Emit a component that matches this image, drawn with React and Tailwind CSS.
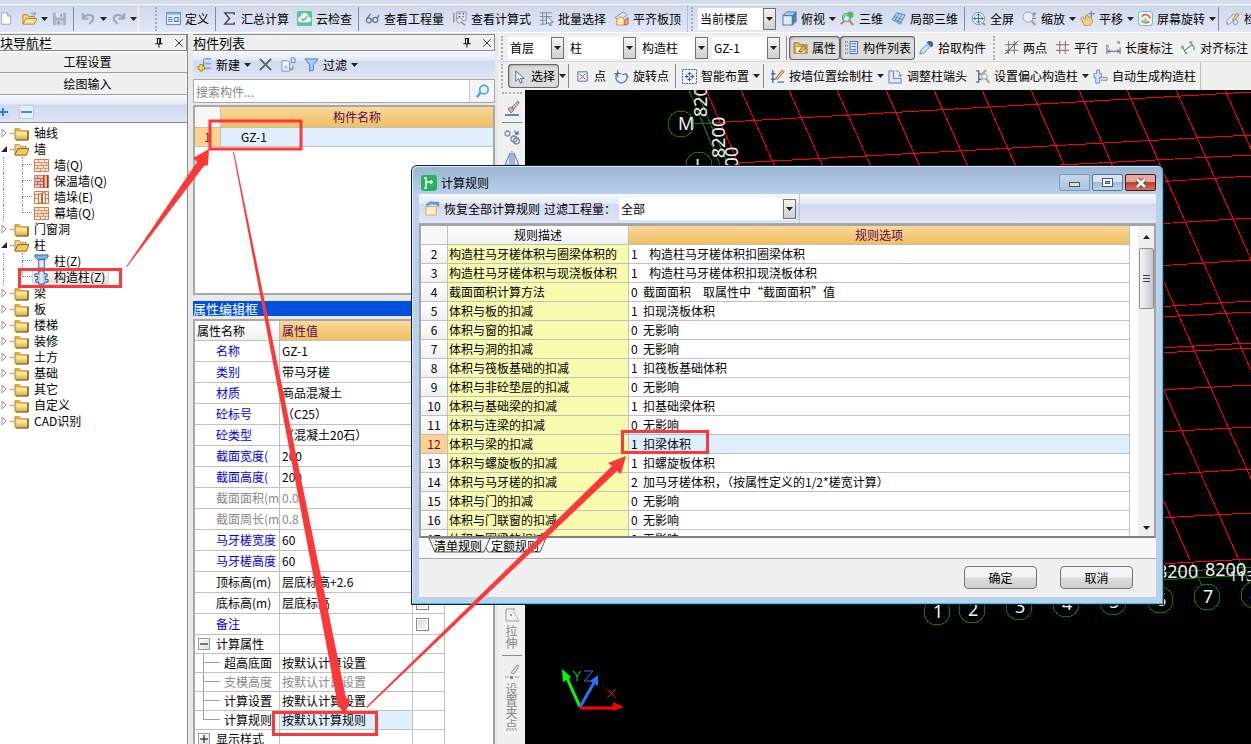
import { useState } from 'react'

const bar = 'bg-[linear-gradient(#f6f9ff_0%,#e3e9f5_34%,#d1d9ed_36%,#dfe5f6_100%)]'
const gold = 'bg-[linear-gradient(#f9d99c,#f0bf60)]'

const glyphs = {
  file: <path d="M2 1h7l4 4v10H2z M9 1v4h4" fill="#fff" stroke="#8a9bb5" />,
  open: (
    <>
      <path d="M1 14V4h5l1 2h6v3" fill="#f5d583" stroke="#a8823a" />
      <path d="M1 14l3-6h12l-3 6z" fill="#fbe29a" stroke="#a8823a" />
      <path d="M9 3c2-2 4-1 5 1m0-3v3h-3" fill="none" stroke="#7f9bb0" />
    </>
  ),
  save: (
    <>
      <path d="M1 2h14v13H1z" fill="#a9b0c2" />
      <path d="M4 2h8v5H4z" fill="#dfe3ee" />
      <path d="M4 10h8v5H4z" fill="#c9cedd" />
      <path d="M9 3h2v3H9zM6 11h2v3H6z" fill="#8f97ac" />
    </>
  ),
  undo: <path d="M2 2v6h6M3 7c3-4 10-4 10 1 0 3-3 4-4 6" fill="none" stroke="#a4aabd" strokeWidth="2.4" />,
  redo: <path d="M14 2v6H8m5-1C10 3 3 3 3 8c0 3 3 4 4 6" fill="none" stroke="#a4aabd" strokeWidth="2.4" />,
  define: (
    <>
      <path d="M.5 1.5h15v13H.5z" fill="#e8f0fb" stroke="#5b7fc0" />
      <path d="M1 2h14v2H1z" fill="#8fb0e4" />
      <path d="M2 7h5M2 9h5M2 11h5M9 7h5M9 11h5" stroke="#5578b8" />
      <path d="M9 7h4v4H9z" fill="none" stroke="#5578b8" />
    </>
  ),
  sigma: <path d="M13 4V2H3l5 6-5 6h10v-2" fill="none" stroke="#3c4254" strokeWidth="1.5" />,
  cloud: (
    <>
      <rect width="16" height="16" rx="1" fill="#58c79a" />
      <path d="M4 12a3 3 0 0 1 0-6 4 4 0 0 1 8 0 3 3 0 0 1 0 6z" fill="#f2fbf6" />
      <path d="M5 8l2 2 4-4" fill="none" stroke="#3fae7e" strokeWidth="1.5" />
    </>
  ),
  glasses: (
    <g fill="none" stroke="#66748c" strokeWidth="1.3">
      <circle cx="4" cy="10" r="2.6" />
      <circle cx="11" cy="9.5" r="2.6" />
      <path d="M6.5 9.5h2M2 8l4-5M13 8l2-4" />
    </g>
  ),
  formula: (
    <>
      <path d="M5 1h10v9H5z" fill="#e9effa" stroke="#8593b5" />
      <path d="M7 3h2M11 3h2M7 6h2M11 6h2" stroke="#5b6f9f" strokeWidth="1.5" />
      <circle cx="8" cy="10" r="3" fill="#dceafa" stroke="#8794ab" />
      <path d="M2 2v10M10 12l4 3" stroke="#b28a4c" strokeWidth="1.5" />
    </>
  ),
  batch: (
    <>
      <path d="M1 2h13M1 6h13M1 10h8M1 14h6M4 1v14M8 1v10" stroke="#7f8ba8" />
      <path d="M8 5v9l2-2 2 4 1-1-1-3h3z" fill="#fff" stroke="#62708d" />
    </>
  ),
  level: (
    <>
      <path d="M1 7l9-6 4 3-8 6z" fill="#dce5f2" stroke="#8090ad" />
      <path d="M3 9l4-3 4 3v6H3z" fill="#fff2a8" stroke="#c89336" />
      <path d="M11 10l4-3v7l-4 1z" fill="#e9a07e" stroke="#b8684a" />
    </>
  ),
  cube: (
    <>
      <path d="M1 5l4-4h10l-4 4z" fill="#a9cdf0" stroke="#54708f" />
      <path d="M1 5h10v10H1z" fill="#dcebf9" stroke="#54708f" />
      <path d="M11 5l4-4v10l-4 4z" fill="#4d83bd" stroke="#54708f" />
    </>
  ),
  view3d: (
    <>
      <circle cx="7" cy="7" r="4.5" fill="#a4d9a0" stroke="#5b8f67" />
      <circle cx="11" cy="4" r="3.4" fill="#55b950" />
      <path d="M10 10l4 5M1 14l4-4" stroke="#b58248" strokeWidth="2" />
      <circle cx="7" cy="8" r="3" fill="#d9eefc" stroke="#7fa6bf" />
    </>
  ),
  part3d: (
    <>
      <path d="M1 9l5-7 9 2-5 10z" fill="#b9d8f4" stroke="#4e84b9" />
      <path d="M4 10l5-8M7 12l5-9M3 6l9 3M4 9l7 3" stroke="#4e84b9" />
    </>
  ),
  full: (
    <>
      <circle cx="8" cy="8" r="6.5" fill="#eaf2fd" stroke="#6f8bb8" />
      <path d="M8 3v10M3 8h10M6 5l2-2 2 2M6 11l2 2 2-2M5 6L3 8l2 2M11 6l2 2-2 2" fill="none" stroke="#3f6097" />
      <path d="M13 13l2 2" stroke="#b58248" strokeWidth="2" />
    </>
  ),
  zoomer: (
    <>
      <circle cx="6.5" cy="6.5" r="5.5" fill="#e4effb" stroke="#93a3bd" />
      <path d="M10 10l4 5" stroke="#c79a55" strokeWidth="2.4" />
      <path d="M13 1v5M11 3h4M11 8h4" stroke="#6e7f9f" />
    </>
  ),
  pan: (
    <>
      <path d="M1 8l2-2 3 3V5l2-1 1 3 2-1 2 3v3l-3 4H5z" fill="#f1cf8c" stroke="#b68d48" />
      <path d="M12 0v7M9 3h7" stroke="#5e6f8e" />
    </>
  ),
  spin: (
    <>
      <rect x=".5" y=".5" width="15" height="15" rx="3" fill="#e6f5f6" stroke="#64bac4" />
      <path d="M4 6a5 5 0 0 1 9 2M12 11a5 5 0 0 1-8-1" fill="none" stroke="#e2694a" strokeWidth="1.8" />
      <path d="M5 12l3-5 3 5z" fill="#9fd487" />
    </>
  ),
  check: (
    <>
      <path d="M2 10l7-7 3 3-7 8H2z" fill="#e1eaf7" stroke="#7d8fae" />
      <path d="M8 9l5-7 2 2-5 7z" fill="#f0c987" stroke="#b58248" />
      <circle cx="11" cy="12" r="2.5" fill="#d8e8fa" stroke="#7d8fae" />
    </>
  ),
  attr: (
    <>
      <path d="M1 3h5l1 2h8v9H1z" fill="#f3b550" stroke="#a66f22" />
      <path d="M3 7h10v7H3z" fill="#fff" stroke="#c79242" />
      <path d="M6 12l5-6 3 2-5 5z" fill="#d7c33c" stroke="#77661e" />
    </>
  ),
  list: (
    <>
      <path d="M1 2h3M1 6h3M1 10h3M1 14h3" stroke="#5f7bb4" strokeDasharray="1 1" strokeWidth="2" />
      <path d="M6.5 1.5h8v13h-8z" fill="#dfe9fa" stroke="#4767a8" />
      <path d="M8 4h5M8 7h5M8 10h5M8 12h5" stroke="#4767a8" />
    </>
  ),
  dropper: (
    <>
      <path d="M1 15l1-4 6-6 3 3-6 6z" fill="#cfe4f8" stroke="#6f88a8" />
      <path d="M8 3l2-2h3l2 2v3l-2 2z" fill="#3f6aa6" />
    </>
  ),
  two: (
    <>
      <path d="M5 1v14M11 1v14M1 5h14M1 11h14" stroke="#6a7488" />
      <path d="M1 15L15 1" stroke="#a33b3b" />
      <path d="M3 12h2v2H3zM11 3h2v2h-2z" fill="#3a9a4a" />
    </>
  ),
  parallel: (
    <>
      <path d="M5 1v14M11 1v14" stroke="#6a7488" />
      <path d="M1 5h14M1 11h14" stroke="#99556a" />
    </>
  ),
  length: (
    <>
      <path d="M1 8v7M15 8v7M2 12h12M4 10l-2 2 2 2M12 10l2 2-2 2" fill="none" stroke="#4c5468" />
      <path d="M0 5h3v3H0zM12 1h3v3h-3z" fill="#6ec472" />
    </>
  ),
  align: (
    <>
      <path d="M2 8l3 6M10 2l4 6M4 11l8-6" stroke="#4c5468" />
      <path d="M0 6h3v3H0zM9 1h3v3H9zM13 8h2v3h-2zM4 13h3v2H4z" fill="#6ec472" />
    </>
  ),
  cursor: <path d="M4 2v11l3-3 2 5 2-1-2-4h4z" fill="#fff" stroke="#4b6392" />,
  point: (
    <>
      <path d="M3 3h10v10H3z" fill="#e9effb" stroke="#566fa8" />
      <path d="M5 5l6 6M11 5l-6 6" stroke="#c34b62" />
    </>
  ),
  rotate: (
    <>
      <path d="M5 3.500a6 6 0 1 0 8 2M13 5l-4 1M13 5l2 4" fill="none" stroke="#6781b5" strokeWidth="1.5" />
      <path d="M4 1v8M0 5h8" stroke="#4c5f88" />
    </>
  ),
  smart: (
    <>
      <path d="M.5.5h15v15H.5z" fill="#eef2fa" stroke="#44506c" strokeDasharray="2 1" />
      <path d="M8 3v4M8 9v4M3 8h4M9 8h4M6 5h4M6 11h4M5 6v4M11 6v4" stroke="#34466e" />
    </>
  ),
  wall: (
    <>
      <path d="M3 1v14M1 5h5M1 11h5M8 14h7" stroke="#4f6ba8" strokeWidth="1.5" />
      <path d="M6 10l7-9 2 2-7 8z" fill="#e8bf7b" stroke="#97713a" />
    </>
  ),
  end: (
    <>
      <path d="M1 2h5v8h8v5H1z" fill="#dce6f8" stroke="#6279b0" />
      <path d="M8 2c4 0 5 2 5 6M11 6l2 2 2-2" fill="none" stroke="#6279b0" />
    </>
  ),
  offset: (
    <>
      <path d="M1 2h3v3h3M1 14h3v-3h3M4 5v6" fill="none" stroke="#4f6ba8" strokeWidth="1.5" />
      <circle cx="10" cy="8" r="3" fill="#e4effb" stroke="#8593ab" />
      <path d="M12 10l3 5M8 5l4-4" stroke="#c79a55" strokeWidth="2" />
    </>
  ),
  autogen: (
    <>
      <path d="M4 1h3v4h2v4H7v6H3V9H1V5h3z" fill="#dbe8fb" stroke="#5e7ec0" />
      <path d="M9 9h6v3H8" fill="#e8e8ec" stroke="#85878f" />
    </>
  ),
  add: (
    <>
      <path d="M8 2h7M8 7h7M8 12h7" stroke="#8ca5cf" strokeWidth="2" />
      <path d="M7 2v11" stroke="#6c83b0" />
      <path d="M3 8h3v2h2v3H6v2H3v-2H1v-3h2z" fill="#f6e04c" stroke="#a48b1c" />
    </>
  ),
  cross: <path d="M2 2l12 12M14 2L2 14" stroke="#5d6168" strokeWidth="2" />,
  copy: (
    <>
      <path d="M1 4h6l2 2v9H1z" fill="#f5f7fc" stroke="#8390aa" />
      <path d="M11 1h4v5h-4zM13 9v4h-3m1-1.5L10 13l1.500 1.500" fill="none" stroke="#6f86bd" />
      <path d="M3 9h4v4H3z" fill="#c7cfdf" />
    </>
  ),
  funnel: <path d="M1 2h14L10 8v6l-4 1V8z" fill="#a9cdf5" stroke="#4b78bb" />,
  brush: (
    <>
      <path d="M8 7l6-6 1 2-5 6z" fill="#f0cb66" stroke="#7d7a8a" />
      <path d="M4 9l3-2 3 3-3 3z" fill="#e6a3c2" stroke="#8a6e96" />
      <path d="M1 15h14" stroke="#5d82bd" strokeWidth="2" />
    </>
  ),
  circles: (
    <g fill="none" stroke="#7d89a4" strokeWidth="1.3">
      <circle cx="3.5" cy="4.5" r="2.5" />
      <circle cx="10" cy="10" r="3" />
      <circle cx="12.5" cy="12" r="3" />
      <path d="M10 2l4 3m0-3v3h-3" stroke="#4f78bf" />
    </g>
  ),
  mirror: <path d="M6 2v12H1zM10 2v12h5zM8 0v16" fill="#dfe9fa" stroke="#5e79b3" />,
  stretch: (
    <>
      <path d="M2 2h9M2 2v12h13" fill="none" stroke="#9a9a9a" />
      <path d="M10 2v3l5 9" fill="none" stroke="#9a9a9a" strokeDasharray="2 1" />
      <path d="M6 7h2v2H6z" fill="#9a9a9a" />
    </>
  ),
  grip: (
    <>
      <path d="M7 9l6-8 2 1-5 8z" fill="#ddd" stroke="#999" />
      <path d="M1 13h4M11 13h4" stroke="#999" />
      <path d="M6 12h3v3H6z" fill="#888" />
    </>
  ),
  restore: (
    <>
      <path d="M1 6h11v9H1z" fill="#fbf0bd" stroke="#c4b074" />
      <path d="M2 5c2-3 5-4 9-2" fill="none" stroke="#6b9be0" strokeWidth="3" />
      <path d="M9 1h6v6z" fill="#5a8bd6" />
    </>
  ),
  search: (
    <>
      <circle cx="9.5" cy="6" r="4.5" fill="#eef8ff" stroke="#4aa3dd" strokeWidth="1.8" />
      <path d="M6 9l-4 5" stroke="#4aa3dd" strokeWidth="2.6" />
    </>
  ),
  pin: <path d="M5 2h6M6 2v7M10 2v7M9 2v7M3 9h10M8 9v5" stroke="#111" strokeWidth="1.4" fill="none" />,
  close: <path d="M3 3l10 10M13 3L3 13" stroke="#333" strokeWidth="1.3" />,
  folder: (
    <>
      <path d="M1 3h5l1 2h8v9H1z" fill="#e9b93f" stroke="#b08a2b" />
      <path d="M2 6h12v7H2z" fill="#fbe39a" />
      <path d="M2 10h12v3H2z" fill="#efc65c" />
      <path d="M15 5v10H2" fill="none" stroke="#4c3c12" />
    </>
  ),
  folderOpen: (
    <>
      <path d="M1 13V3h5l1 2h6v3" fill="#f7dc8c" stroke="#b08a2b" />
      <path d="M1 14l3-7h12l-3 7z" fill="#f4cd5d" stroke="#7b5f1c" />
    </>
  ),
  brick: (
    <>
      <path d="M.5 1.5h15v13H.5z" fill="#fdeadb" stroke="#c2703c" />
      <path d="M1 5h14M1 8h14M1 11h14M5 2v3M11 2v3M8 5v3M13 5v3M4 8v3M10 8v3M7 11v3M12 11v3" stroke="#d58a58" />
    </>
  ),
  brickDark: (
    <>
      <path d="M.5 1.5h15v13H.5z" fill="#f3c3b4" stroke="#c07a70" />
      <path d="M1 5h9M1 8h9M1 11h9M4 2v3M7 5v3M4 8v3M7 11v3" stroke="#b0605a" />
      <path d="M10.5 1v14M14.5 1v14" stroke="#8f3b22" strokeWidth="1.5" />
      <path d="M12.5 2v12" stroke="#f0b78a" strokeWidth="2" />
    </>
  ),
  brickStep: (
    <>
      <path d="M.5 1.5h15v13H.5z" fill="#fdeadb" stroke="#c2703c" />
      <path d="M1 5h4M1 9h4M12 5h3M12 9h3" stroke="#c2703c" />
      <path d="M5 4h3v10H5zM9 3h3v11H9z" fill="#fff" stroke="#b25a28" />
    </>
  ),
  column: (
    <>
      <path d="M1 1h14v2l-3 3H4L1 3z" fill="#7faeea" stroke="#2c5aa8" />
      <path d="M5 6h6v9H5z" fill="#dfeeff" stroke="#2c5aa8" />
    </>
  ),
  structural: (
    <>
      <path d="M5 1h6v3h3v3h-2v3h3v3h-4v2H5v-2H2v-3h2V7H1V4h4z" fill="#b9d3f8" stroke="#274f9c" />
      <path d="M7 2h2v12H7z" fill="#f2f7ff" />
    </>
  ),
}

function Icon({ name, className = 'w-[15px] h-[15px]' }) {
  return (
    <svg viewBox="0 0 16 16" className={`shrink-0 ${className}`} aria-hidden="true">
      {glyphs[name]}
    </svg>
  )
}

function Caret({ className = '' }) {
  return (
    <svg viewBox="0 0 7 4" className={`w-[7px] h-1 shrink-0 ${className}`} aria-hidden="true">
      <path d="M0 0h7L3.500 4z" fill="#222" />
    </svg>
  )
}

function ToolButton({ icon, label, menu, pressed }) {
  return (
    <button
      className={`flex items-center gap-1 h-6 shrink-0 whitespace-nowrap pl-1 ${menu ? 'pr-0' : 'pr-1'} ${
        pressed ? 'rounded-sm bg-[#dcdcdc] shadow-[inset_0_0_0_1px_#666,inset_1px_1px_3px_#888]' : ''
      }`}
    >
      <Icon name={icon} />
      {label && <span>{label}</span>}
      {menu && <Caret />}
    </button>
  )
}

function Sep() {
  return <span className="w-px h-6 mx-[2px] bg-[#888c96] shrink-0" />
}

function Grip() {
  return <span className="w-[3px] h-6 mr-1 ml-[3px] border-l-2 border-dotted border-[#a9adb8] shrink-0" />
}

function Combo({ label, value, className }) {
  return (
    <div className={`relative shrink-0 ${className}`}>
      <select aria-label={label} className="appearance-none w-full h-[22px] bg-white pl-[2px] pr-4 text-[12px] outline-none">
        <option>{value}</option>
      </select>
      <span className="absolute right-0 top-0 w-[13px] h-[22px] border border-[#707070] bg-[linear-gradient(#f4f4f4,#cfcfcf)] flex items-center justify-center pointer-events-none">
        <Caret />
      </span>
    </div>
  )
}

function MainToolbar() {
  return (
    <div className="flex items-center h-[29px] shrink-0 overflow-hidden border-y border-y-white bg-[linear-gradient(#cfd8ec,#e1e7f6)]">
      <div className="flex items-center h-full w-[139px] shrink-0 border-r border-white">
        <Icon name="file" className="w-[13px] h-[15px]" />
        <span className="w-[5px]" />
        <ToolButton icon="open" menu />
        <ToolButton icon="save" />
        <Sep />
        <span className="w-px" />
        <ToolButton icon="undo" menu />
        <ToolButton icon="redo" menu />
      </div>
      <div className="flex items-center h-full ml-[13px] w-[536px] shrink-0 border-r border-r-[#b8bfd0]">
        <Grip />
        <ToolButton icon="define" label="定义" />
        <Sep />
        <ToolButton icon="sigma" label="汇总计算" />
        <ToolButton icon="cloud" label="云检查" />
        <Sep />
        <ToolButton icon="glasses" label="查看工程量" />
        <ToolButton icon="formula" label="查看计算式" />
        <ToolButton icon="batch" label="批量选择" />
        <ToolButton icon="level" label="平齐板顶" />
      </div>
      <Grip />
      <Combo label="楼层范围" value="当前楼层" className="w-[78px] mr-[2px]" />
      <ToolButton icon="cube" label="俯视" menu />
      <ToolButton icon="view3d" label="三维" />
      <ToolButton icon="part3d" label="局部三维" />
      <Sep />
      <ToolButton icon="full" label="全屏" />
      <ToolButton icon="zoomer" label="缩放" menu />
      <ToolButton icon="pan" label="平移" menu />
      <ToolButton icon="spin" label="屏幕旋转" menu />
      <Sep />
      <ToolButton icon="check" label="检" />
    </div>
  )
}

function PanelTitle({ children }) {
  return (
    <div className="flex items-center h-[17px] shrink-0 border border-l-0 border-[#8c8c8c] bg-[#f0f0f0] text-[13px] leading-[15px]">
      <h2 className="flex-1">{children}</h2>
      <button aria-label="固定"><Icon name="pin" className="w-3 h-3" /></button>
      <button aria-label="关闭" className="ml-2 mr-px"><Icon name="close" className="w-3 h-3" /></button>
    </div>
  )
}

const tree = [
  { label: '轴线' },
  {
    label: '墙',
    children: [
      { label: '墙(Q)', icon: 'brick' },
      { label: '保温墙(Q)', icon: 'brickDark' },
      { label: '墙垛(E)', icon: 'brickStep' },
      { label: '幕墙(Q)', icon: 'brick' },
    ],
  },
  { label: '门窗洞' },
  {
    label: '柱',
    children: [
      { label: '柱(Z)', icon: 'column' },
      { label: '构造柱(Z)', icon: 'structural', active: true },
    ],
  },
  { label: '梁' },
  { label: '板' },
  { label: '楼梯' },
  { label: '装修' },
  { label: '土方' },
  { label: '基础' },
  { label: '其它' },
  { label: '自定义' },
  { label: 'CAD识别' },
]

function TreeLeaf({ node, last }) {
  return (
    <li className="flex items-center h-4">
      <span className="ml-[3px] w-[19px] h-full border-l border-dotted border-[#888]" />
      <span className="w-[10px] h-full flex flex-col">
        <span className="h-2 border-l border-b border-dotted border-[#888]" />
        {!last && <span className="h-2 border-l border-dotted border-[#888]" />}
      </span>
      <button
        className={`flex items-center h-4 gap-[5px] pl-[2px] pr-1 leading-4 ${
          node.active ? 'rounded-sm bg-[linear-gradient(#fafafa,#e0e0e0)] shadow-[inset_0_0_0_1px_#d4d4d4]' : ''
        }`}
      >
        <Icon name={node.icon} />
        {node.label}
      </button>
    </li>
  )
}

function TreeNode({ node }) {
  const [open, setOpen] = useState(Boolean(node.children))

  return (
    <li>
      <button className="flex items-center h-4 leading-4" onClick={() => setOpen(v => !v)}>
        <svg viewBox="0 0 8 8" className="w-2 h-2 mr-[2px]" aria-hidden="true">
          {open ? <path d="M7 1v6H1z" fill="#222" /> : <path d="M2 0l4 4-4 4z" fill="#fff" stroke="#999" />}
        </svg>
        <span className="w-1 border-b border-dotted border-[#888]" />
        <Icon name={open ? 'folderOpen' : 'folder'} />
        <span className="ml-[5px]">{node.label}</span>
      </button>
      {open && node.children && (
        <ul>
          {node.children.map((c, i) => (
            <TreeLeaf key={c.label} node={c} last={i === node.children.length - 1} />
          ))}
        </ul>
      )}
    </li>
  )
}

function NavPanel() {
  return (
    <aside className="w-[188px] shrink-0 flex flex-col border-r border-r-[#8c8c8c]">
      <PanelTitle>块导航栏</PanelTitle>
      <button className="h-[22px] pr-3 shrink-0 border-b border-t border-b-[#a0a0a0] border-t-white bg-[#f0f0f0]">工程设置</button>
      <button className="h-[22px] pr-3 shrink-0 border-b border-b-[#a0a0a0] bg-[#f0f0f0]">绘图输入</button>
      <div className={`h-[27px] pt-[6px] flex items-center gap-2 shrink-0 ${bar}`}>
        <button aria-label="全部展开" className="w-[11px] h-[14px] bg-[#cfdcf8] flex items-center">
          <svg viewBox="0 0 8 8" className="w-2 h-2" aria-hidden="true">
            <path d="M0 4h8M3 0v8" stroke="#2f86c8" strokeWidth="2" />
          </svg>
        </button>
        <button aria-label="全部折叠" className="w-[15px] h-[14px] bg-[#e6eefc] border border-[#b9cbf0] flex items-center justify-center">
          <span className="w-[11px] h-[2px] bg-[#3d93cf]" />
        </button>
      </div>
      <ul className="flex-1 pt-[2px] border-t border-t-[#8c8c8c] bg-white overflow-hidden">
        {tree.map(n => <TreeNode key={n.label} node={n} />)}
      </ul>
    </aside>
  )
}

const props = [
  { name: '名称', value: 'GZ-1', color: 'text-[#0000f0]' },
  { name: '类别', value: '带马牙槎', color: 'text-[#0000f0]' },
  { name: '材质', value: '商品混凝土', color: 'text-[#0000f0]' },
  { name: '砼标号', value: '（C25）', color: 'text-[#0000f0]' },
  { name: '砼类型', value: '（混凝土20石）', color: 'text-[#0000f0]' },
  { name: '截面宽度(', value: '200', color: 'text-[#0000f0]' },
  { name: '截面高度(', value: '200', color: 'text-[#0000f0]' },
  { name: '截面面积(m', value: '0.04', color: 'text-[#888]', muted: true },
  { name: '截面周长(m', value: '0.8', color: 'text-[#888]', muted: true },
  { name: '马牙槎宽度', value: '60', color: 'text-[#0000f0]' },
  { name: '马牙槎高度', value: '60', color: 'text-[#0000f0]' },
  { name: '顶标高(m)', value: '层底标高+2.6' },
  { name: '底标高(m)', value: '层底标高' },
  { name: '备注', value: '', color: 'text-[#0000f0]' },
]

const calcProps = [
  { name: '超高底面', value: '按默认计算设置' },
  { name: '支模高度', value: '按默认计算设置', muted: true },
  { name: '计算设置', value: '按默认计算设置' },
  { name: '计算规则', value: '按默认计算规则', active: true },
]

function Toggle({ open }) {
  return (
    <button
      aria-label={open ? '折叠' : '展开'}
      className="w-3 h-3 mr-[6px] shrink-0 border border-[#9a9a9a] bg-[linear-gradient(135deg,#fff,#ddd)]"
    >
      <svg viewBox="0 0 10 10" className="w-[10px] h-[10px]" aria-hidden="true">
        <path d={open ? 'M1 5h8' : 'M1 5h8M5 1v8'} stroke="#000" />
      </svg>
    </button>
  )
}

function PropertyTable() {
  const cell = 'border-r border-b border-[#c0c0c0] p-0 overflow-hidden whitespace-nowrap'

  return (
    <div className="flex-1 border-2 border-b-0 border-[#a8a8a8] border-r-[#a0a0a0] bg-white overflow-hidden">
      <table className="w-[250px] table-fixed border-separate border-spacing-0">
        <colgroup>
          <col className="w-[85px]" />
          <col className="w-[133px]" />
          <col className="w-[32px]" />
        </colgroup>
        <thead>
          <tr className="h-5 text-left">
            <th className={`${cell} pl-[2px] font-normal bg-[linear-gradient(#fff,#f0f0f0)]`}>属性名称</th>
            <th className={`${cell} pl-[2px] font-normal text-[#5a0a50] ${gold}`}>属性值</th>
            <th className={cell} />
          </tr>
        </thead>
        <tbody>
          {props.map(p => (
            <tr key={p.name} className="h-[21px]">
              <td className={`${cell} pl-[21px] ${p.color ?? ''}`}>{p.name}</td>
              <td className={`${cell} pl-[2px] ${p.muted ? 'text-[#888]' : ''}`}>{p.value}</td>
              <td className={cell}>
                <input
                  type="checkbox"
                  aria-label={`${p.name} 附加`}
                  className="appearance-none block ml-[3px] w-[13px] h-[13px] border border-[#888] bg-[linear-gradient(135deg,#d0d4d8,#fff)] shadow-[inset_0_0_0_1px_#fff]"
                />
              </td>
            </tr>
          ))}
          <tr className="h-[19px]">
            <td className={cell}>
              <div className="flex items-center pl-[3px]"><Toggle open />计算属性</div>
            </td>
            <td className={cell} />
            <td className={cell} />
          </tr>
          {calcProps.map((p, i) => (
            <tr key={p.name} className={`h-[19px] ${p.muted ? 'text-[#888]' : ''}`}>
              <td className={cell}>
                <div className="flex h-[18px] leading-[18px]">
                  <span className="ml-2 mr-1 w-[17px] shrink-0 flex flex-col">
                    <span className="h-[9px] border-l border-b border-[#a0a0a0]" />
                    {i < calcProps.length - 1 && <span className="h-[9px] border-l border-[#a0a0a0]" />}
                  </span>
                  {p.name}
                </div>
              </td>
              <td className={`${cell} pl-[2px] ${p.active ? 'bg-[#e0efff]' : ''}`}>{p.value}</td>
              <td className={cell} />
            </tr>
          ))}
          <tr className="h-[19px]">
            <td className={cell}>
              <div className="flex items-center pl-[3px]"><Toggle />显示样式</div>
            </td>
            <td className={cell} />
            <td className={cell} />
          </tr>
        </tbody>
      </table>
    </div>
  )
}

function ComponentPanel() {
  return (
    <section className="w-[302px] ml-[5px] shrink-0 flex flex-col">
      <PanelTitle>构件列表</PanelTitle>
      <div className={`flex items-center h-[27px] shrink-0 ${bar}`}>
        <ToolButton icon="add" label="新建" menu />
        <span className="w-[3px]" />
        <ToolButton icon="cross" />
        <ToolButton icon="copy" />
        <ToolButton icon="funnel" label="过滤" menu />
      </div>
      <div className="flex items-center h-6 mt-px shrink-0 border border-[#a8a8a8] bg-white">
        <input
          type="text"
          aria-label="搜索构件"
          placeholder="搜索构件..."
          className="flex-1 min-w-0 h-full pl-[2px] outline-none border-r border-[#ccc] placeholder:text-[#888]"
        />
        <button aria-label="搜索" className="w-6 h-full flex items-center justify-center bg-[#f4f4f4]">
          <Icon name="search" />
        </button>
      </div>
      <div className="h-[190px] mt-[2px] shrink-0 border-2 border-[#a8a8a8] bg-white">
        <table className="w-full border-separate border-spacing-0">
          <thead>
            <tr className="h-[21px]">
              <th className="w-[26px] p-0 border-r border-b border-[#c0c0c0] bg-[#f6f6f6]" />
              <th className={`p-0 font-normal text-[#5a0a50] border-b border-[#c0c0c0] ${gold}`}>构件名称</th>
            </tr>
          </thead>
          <tbody>
            <tr className="h-[19px]">
              <td className="p-0 text-center text-[#5a0a50] bg-[#fdd28c] border-r border-b border-[#c0c0c0]">1</td>
              <td className="p-0 pl-5 bg-[#dfefff] border-b border-[#c0c0c0]">GZ-1</td>
            </tr>
          </tbody>
        </table>
      </div>
      <h2 className="mt-[6px] mb-[3px] h-[15px] leading-[15px] shrink-0 bg-[#0050e0] text-white text-[13px]">属性编辑框</h2>
      <PropertyTable />
    </section>
  )
}

function SelectionBar() {
  return (
    <div className="flex items-center h-7 shrink-0 border-b border-b-[#d8d8d8] bg-[#f0f0f0] overflow-hidden">
      <Grip />
      <div className="flex gap-1 mr-1">
        <Combo label="楼层" value="首层" className="w-[56px]" />
        <Combo label="构件大类" value="柱" className="w-[68px]" />
        <Combo label="构件类型" value="构造柱" className="w-[68px]" />
        <Combo label="构件" value="GZ-1" className="w-[68px]" />
      </div>
      <Sep />
      <ToolButton icon="attr" label="属性" pressed />
      <ToolButton icon="list" label="构件列表" pressed />
      <ToolButton icon="dropper" label="拾取构件" />
      <span className="w-px h-7 bg-[#c8c8c8]" />
      <Grip />
      <ToolButton icon="two" label="两点" />
      <ToolButton icon="parallel" label="平行" />
      <ToolButton icon="length" label="长度标注" />
      <ToolButton icon="align" label="对齐标注" />
    </div>
  )
}

function DrawBar() {
  return (
    <div className="flex items-center h-7 shrink-0 bg-[#f0f0f0] overflow-hidden">
      <Grip />
      <ToolButton icon="cursor" label="选择" pressed />
      <button aria-label="选择方式" className="h-6 flex items-center"><Caret /></button>
      <Sep />
      <ToolButton icon="point" label="点" />
      <ToolButton icon="rotate" label="旋转点" />
      <Sep />
      <ToolButton icon="smart" label="智能布置" menu />
      <span className="w-px" />
      <Sep />
      <ToolButton icon="wall" label="按墙位置绘制柱" menu />
      <ToolButton icon="end" label="调整柱端头" />
      <ToolButton icon="offset" label="设置偏心构造柱" menu />
      <ToolButton icon="autogen" label="自动生成构造柱" />
      <span className="w-px h-7 bg-[#c0c0c0]" />
    </div>
  )
}

function EditStrip() {
  return (
    <div className="w-[27px] shrink-0 flex flex-col items-center bg-[#f0f0f0]">
      <span className="w-5 mt-[2px] border-t-2 border-dotted border-[#b0b0b0]" />
      <button aria-label="删除" className="mt-[6px]"><Icon name="brush" className="w-4 h-4" /></button>
      <span className="w-5 h-px my-[6px] bg-[#888]" />
      <button aria-label="复制"><Icon name="circles" className="w-4 h-4" /></button>
      <button aria-label="镜像" className="mt-[6px]"><Icon name="mirror" className="w-4 h-4" /></button>
      <button className="mt-auto flex flex-col items-center text-[#888]">
        <Icon name="stretch" className="w-4 h-4 mb-[2px]" />
        <span className="w-3 leading-3">拉伸</span>
      </button>
      <span className="w-5 h-px mt-[6px] mb-2 bg-[#888]" />
      <button className="flex flex-col items-center text-[#888] mb-[13px]">
        <Icon name="grip" className="w-4 h-4 mb-[3px]" />
        <span className="w-3 leading-3">设置夹点</span>
      </button>
    </div>
  )
}

const gridColumns = [706, 741, 789, 837, 886, 934, 982, 1031, 1079, 1127, 1176, 1225]

// x and y where each row line starts, y where it leaves the view
const gridRows = [
  [710, 123, 92], [737, 163, 135], [1060, 165, 155], [1140, 183, 176],
  [1140, 225, 218], [1140, 267, 260], [1140, 308, 301], [1140, 318, 312],
  [1140, 349, 343], [1140, 354, 348], [1140, 391, 385], [1140, 433, 427],
  [1140, 476, 469], [1140, 519, 513], [1140, 565, 559],
]

const axes = [
  [937, 612, '1'], [972, 610, '2'], [1019, 607, '3'], [1066, 604, '4'],
  [1113, 602, '5'], [1160, 600, '6'], [1207, 597, '7'], [1254, 595, '8'],
]

function Canvas() {
  return (
    <svg className="flex-1 min-w-0 h-full bg-black" role="img" aria-label="轴网">
      <g transform="translate(-525 -90)" shapeRendering="crispEdges" fill="none">
        <g stroke="#f00">
          {gridColumns.map(x => <path key={x} d={`M${x} 90L${x + 208} 560`} />)}
          {gridRows.map(([x, y1, y2]) => <path key={y1} d={`M${x} ${y1}L1251 ${y2}`} />)}
        </g>
        <g stroke="#008000">
          <path d="M689 90L720 165M696 90L728 165M693 123h18" />
          <path d="M1140 574L1251 567M1140 581L1251 575M1192 562L1202 586M1239 560L1249 583" />
          <circle cx="681" cy="124" r="13" />
          <circle cx="699" cy="165" r="13" />
          {axes.map(([cx, cy]) => <circle key={cx} cx={cx} cy={cy} r="13" />)}
        </g>
      </g>
      <g transform="translate(-525 -90)" fill="#f0f0f0" className="font-['Noto_Sans',sans-serif] text-[18px]">
        <text x="678" y="130">M</text>
        <text x="695" y="172">L</text>
        <text transform="translate(707 117) rotate(-90)">8200</text>
        <text transform="translate(725 158) rotate(-90)">8200</text>
        <text transform="translate(738 188) rotate(-90)">8200</text>
        <text x="1157" y="578">8200</text>
        <text x="1205" y="576">8200</text>
        <text x="1229" y="581" className="text-[15px]">113</text>
        {axes.map(([cx, cy, n]) => <text key={n} x={cx - 4} y={cy + 6}>{n}</text>)}
      </g>
      <g transform="translate(-525 -90)" fill="none" strokeWidth="3">
        <path d="M580 707L566 676" stroke="#0f0" />
        <path d="M562 669l9 8-8 5z" fill="#0f0" />
        <path d="M580 707L595 681" stroke="#1e78ff" />
        <path d="M598 675l0 11-8-5z" fill="#1e78ff" />
        <path d="M580 708h36" stroke="#f00" />
        <path d="M624 707l-11-5v9z" fill="#f00" />
        <path d="M573 671l4 5 4-5M577 676v5" stroke="#0f0" strokeWidth="1" />
        <path d="M584 671h9l-9 10h9" stroke="#1e78ff" strokeWidth="1" />
        <path d="M607 689l9 9M616 689l-9 9" stroke="#f00" strokeWidth="1" />
      </g>
    </svg>
  )
}

const rules = [
  { id: 2, name: '构造柱马牙槎体积与圈梁体积的', code: '1', option: '构造柱马牙槎体积扣圈梁体积', indent: true },
  { id: 3, name: '构造柱马牙槎体积与现浇板体积', code: '1', option: '构造柱马牙槎体积扣现浇板体积', indent: true },
  { id: 4, name: '截面面积计算方法', code: '0', option: '截面面积　取属性中“截面面积”值' },
  { id: 5, name: '体积与板的扣减', code: '1', option: '扣现浇板体积' },
  { id: 6, name: '体积与窗的扣减', code: '0', option: '无影响' },
  { id: 7, name: '体积与洞的扣减', code: '0', option: '无影响' },
  { id: 8, name: '体积与筏板基础的扣减', code: '1', option: '扣筏板基础体积' },
  { id: 9, name: '体积与非砼垫层的扣减', code: '0', option: '无影响' },
  { id: 10, name: '体积与基础梁的扣减', code: '1', option: '扣基础梁体积' },
  { id: 11, name: '体积与连梁的扣减', code: '0', option: '无影响' },
  { id: 12, name: '体积与梁的扣减', code: '1', option: '扣梁体积' },
  { id: 13, name: '体积与螺旋板的扣减', code: '1', option: '扣螺旋板体积' },
  { id: 14, name: '体积与马牙槎的扣减', code: '2', option: '加马牙槎体积，（按属性定义的1/2*槎宽计算）' },
  { id: 15, name: '体积与门的扣减', code: '0', option: '无影响' },
  { id: 16, name: '体积与门联窗的扣减', code: '0', option: '无影响' },
  { id: 17, name: '体积与圈梁的扣减', code: '0', option: '无影响' },
]

function RuleTable() {
  const [selected, setSelected] = useState(12)
  const cell = 'p-0 border-r border-b border-[#c0c0c0] whitespace-nowrap overflow-hidden'

  return (
    <div className="flex h-[314px] border-2 border-[#a4a4a4] border-b-[#808080] bg-white overflow-hidden">
      <div className="flex-1 min-w-0 overflow-hidden">
        <table className="w-full table-fixed border-separate border-spacing-0">
          <colgroup>
            <col className="w-[27px]" />
            <col className="w-[181px]" />
            <col />
          </colgroup>
          <thead>
            <tr className="h-[19px]">
              <th className={`${cell} bg-[#f6f6f6]`} />
              <th className={`${cell} font-normal bg-[linear-gradient(#fff,#f0f0f0)]`}>规则描述</th>
              <th className={`${cell} font-normal text-[#5a0a50] ${gold}`}>规则选项</th>
            </tr>
          </thead>
          <tbody>
            {rules.map(r => (
              <tr key={r.id} className="h-[19px]" onClick={() => setSelected(r.id)}>
                <td className={`${cell} text-center ${r.id === selected ? 'bg-[#fdd28c] text-[#5a0a50]' : 'bg-[linear-gradient(#fff,#f0f0f0)]'}`}>
                  {r.id}
                </td>
                <td className={`${cell} pl-px bg-[#f7fbae]`}>{r.name}</td>
                <td className={`${cell} pl-[2px] ${r.id === selected ? 'bg-[#dfefff]' : ''}`}>
                  <span className={`inline-block ${r.indent ? 'w-[18px]' : 'w-3'}`}>{r.code}</span>
                  {r.option}
                </td>
              </tr>
            ))}
          </tbody>
        </table>
      </div>
      <div className="w-4 ml-2 shrink-0 flex flex-col items-center bg-[#f0f0f0]">
        <button aria-label="向上滚动" className="h-[22px] flex items-center"><Caret className="rotate-180" /></button>
        <div className="w-[15px] h-[61px] rounded-xs border border-[#909090] bg-[linear-gradient(90deg,#f6f6f6,#e2e2e6_45%,#c6c6ca)] flex flex-col items-center justify-center gap-[2px]">
          <span className="w-[7px] h-px bg-[#444]" />
          <span className="w-[7px] h-px bg-[#444]" />
          <span className="w-[7px] h-px bg-[#444]" />
        </div>
        <button aria-label="向下滚动" className="mt-auto h-4 flex items-center"><Caret /></button>
      </div>
    </div>
  )
}

function RuleDialog() {
  const frame = 'w-[31px] h-[17px] rounded-xs border flex items-center justify-center'

  return (
    <div
      role="dialog"
      aria-label="计算规则"
      className="absolute left-[411px] top-[165px] w-[753px] px-[7px] pb-[7px] rounded-t-md border border-[#16202c] bg-[linear-gradient(#9ab5d2_0,#b9d1ea_28px,#b9d1ea_100%)] shadow-[inset_-1px_-1px_0_#3cc0e0,inset_1px_1px_0_#d8e8f8]"
    >
      <header className="flex items-center h-7 pt-[5px] pl-[2px]">
        <svg viewBox="0 0 16 16" className="w-4 h-4" aria-hidden="true">
          <rect width="16" height="16" rx="3" fill="#25b35f" />
          <path d="M5 3v10M5 7h7M10 5v4M3 3h3M3 13h3" fill="none" stroke="#fff" strokeWidth="1.5" />
        </svg>
        <h1 className="flex-1 ml-1">计算规则</h1>
        <div className="flex gap-[2px]">
          <button aria-label="最小化" className={`${frame} border-[#7d97b8] bg-[linear-gradient(#c5d8ec,#a9c3df)]`}>
            <span className="w-[11px] h-[5px] mt-1 border border-[#555] bg-[#ddd]" />
          </button>
          <button aria-label="最大化" className={`${frame} border-[#5a7598] bg-[linear-gradient(#d6e4f4_45%,#9fbbdb_50%,#bfd5ec)]`}>
            <svg viewBox="0 0 11 9" className="w-[11px] h-[9px]" shapeRendering="crispEdges">
              <path d="M.5.500h10v8H.5z" fill="#fff" stroke="#555" />
              <path d="M3.500 3.500h4v2h-4z" fill="#9fbbdb" stroke="#3f5a80" />
            </svg>
          </button>
          <button aria-label="关闭" className={`${frame} border-[#4c1420] bg-[linear-gradient(#eba79b_45%,#bf3d28_50%,#d8705c)]`}>
            <svg viewBox="0 0 12 10" className="w-3 h-[10px]">
              <path d="M2 1l8 8M10 1L2 9" stroke="#4a4a5a" strokeWidth="4.5" />
              <path d="M2 1l8 8M10 1L2 9" stroke="#fff" strokeWidth="2.6" />
            </svg>
          </button>
        </div>
      </header>
      <div className="bg-[#f0f0f0]">
        <div className={`flex items-center h-[30px] pl-[2px] border-b border-b-[#a8a8b0] ${bar}`}>
          <ToolButton icon="restore" label="恢复全部计算规则" />
          <label htmlFor="quantity">过滤工程量：</label>
          <div className="relative ml-[3px]">
            <select id="quantity" className="appearance-none block w-[177px] h-[22px] bg-white pl-[2px] text-[12px] outline-none">
              <option>全部</option>
            </select>
            <span className="absolute right-0 top-px w-[13px] h-5 border border-[#707070] bg-[linear-gradient(#f4f4f4,#cfcfcf)] flex items-center justify-center pointer-events-none">
              <Caret />
            </span>
          </div>
          <span className="w-px h-full ml-[3px] bg-[#c0c4d4]" />
        </div>
        <RuleTable />
        <div className="relative flex h-[21px] pl-[15px] items-start bg-[#f8f8f8] border-b border-b-[#a8a8a8]">
          <svg className="absolute left-2 top-0 w-32 h-4" aria-hidden="true">
            <path d="M61 4l-3 4 3 6h52l6-14H63z" fill="#fff" stroke="#555" />
            <path d="M2 0l6 14h49l6-14z" fill="#f0f0f0" stroke="#555" />
          </svg>
          <button className="relative h-4 leading-4">清单规则</button>
          <button className="relative h-4 leading-4 ml-[9px]">定额规则</button>
        </div>
        <footer className="flex justify-end gap-[23px] pt-[7px] pb-2 pr-[23px]">
          <button className="w-[73px] h-[23px] rounded-sm border border-[#777] bg-[linear-gradient(#f3f3f3_48%,#dcdcdc_52%,#d0d0d0)]">确定</button>
          <button className="w-[73px] h-[23px] rounded-sm border border-[#777] bg-[linear-gradient(#f3f3f3_48%,#dcdcdc_52%,#d0d0d0)]">取消</button>
        </footer>
      </div>
    </div>
  )
}

function Guide() {
  return (
    <svg className="absolute inset-0 w-full h-full pointer-events-none" aria-hidden="true">
      <g fill="none" stroke="#fc3838" strokeWidth="3">
        <rect x="19.5" y="269.5" width="101" height="17" />
        <rect x="210" y="121" width="91" height="28" />
        <rect x="273.5" y="712.5" width="103" height="22" />
        <rect x="622.5" y="431.5" width="85" height="21" />
      </g>
      <g fill="#fc3838">
        <path d="M126 267L197 162 193 158 209 149 208 165 204 166 127 267z" />
        <path d="M233 152L337 701 334 700 345 715 350 699 346 698 234 152z" />
        <path d="M366 707L612 466 608 463 626 456 621 474 617 471 367 708z" />
      </g>
    </svg>
  )
}

export default function App() {
  return (
    <div className="relative h-screen flex flex-col overflow-hidden bg-[#e9e9e9] text-black text-[12px] leading-4 font-['Noto_Sans_CJK_SC',sans-serif]">
      <div className="h-1 shrink-0 bg-[#d3dbee]" />
      <MainToolbar />
      <div className="flex flex-1 min-h-0 pt-px">
        <NavPanel />
        <ComponentPanel />
        <main className="flex-1 min-w-0 ml-[3px] flex flex-col">
          <SelectionBar />
          <DrawBar />
          <div className="flex flex-1 min-h-0">
            <EditStrip />
            <Canvas />
          </div>
        </main>
      </div>
      <RuleDialog />
      <Guide />
    </div>
  )
}
